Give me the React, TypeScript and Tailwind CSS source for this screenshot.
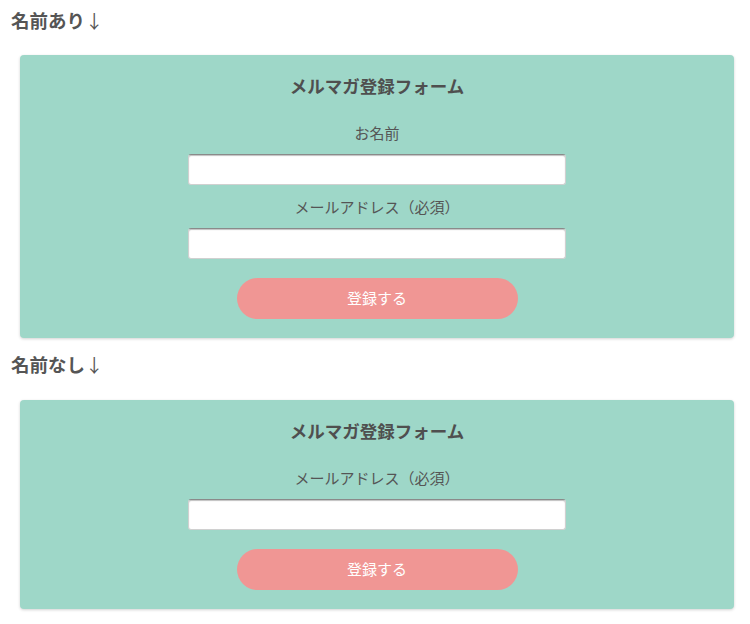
import React from 'react'

function MailForm({ withName }: { withName: boolean }) {
  return (
    <form
      className="ml-[20px] mr-[16px] rounded-[4px] bg-[#9ed7c8] pt-[19px] pb-[19px] shadow-[0_1px_3px_rgba(0,0,0,0.18)] flex flex-col items-center"
      onSubmit={(e) => e.preventDefault()}
    >
      <div className="h-[24px] leading-[24px] text-[17.5px] font-bold text-[#4f4f4f]">
        メルマガ登録フォーム
      </div>
      {withName && (
        <>
          <label className="mt-[23px] h-[24px] leading-[24px] text-[15px] text-[#555]">お名前</label>
          <input
            type="text"
            className="mt-[9px] w-[378px] h-[31px] rounded-[3px] bg-white border border-[#d0d0d0] border-t-[#8a8a8a] shadow-[inset_0_1px_1px_rgba(0,0,0,0.25)]"
          />
        </>
      )}
      <label
        className={
          withName
            ? 'mt-[10px] h-[24px] leading-[24px] text-[15px] text-[#555]'
            : 'mt-[23px] h-[24px] leading-[24px] text-[15px] text-[#555]'
        }
      >
        メールアドレス（必須）
      </label>
      <input
        type="email"
        className="mt-[9px] w-[378px] h-[31px] rounded-[3px] bg-white border border-[#d0d0d0] border-t-[#8a8a8a] shadow-[inset_0_1px_1px_rgba(0,0,0,0.25)]"
      />
      <button
        type="submit"
        className="mt-[19px] w-[281px] h-[41px] rounded-full bg-[#f09694] text-white text-[15px]"
      >
        登録する
      </button>
    </form>
  )
}

export default function App() {
  return (
    <main
      className="w-[750px] h-[624px] bg-white pt-[6px]"
      style={{ fontFamily: '"Noto Sans CJK JP", "Noto Sans", sans-serif' }}
    >
      <h2 className="ml-[11px] h-[28px] leading-[28px] text-[18.5px] font-bold text-[#555]">
        名前あり<span className="font-normal">↓</span>
      </h2>
      <div className="mt-[21px]">
        <MailForm withName={true} />
      </div>
      <h2 className="mt-[12px] ml-[11px] h-[28px] leading-[28px] text-[18.5px] font-bold text-[#555]">
        名前なし<span className="font-normal">↓</span>
      </h2>
      <div className="mt-[22px]">
        <MailForm withName={false} />
      </div>
    </main>
  )
}
